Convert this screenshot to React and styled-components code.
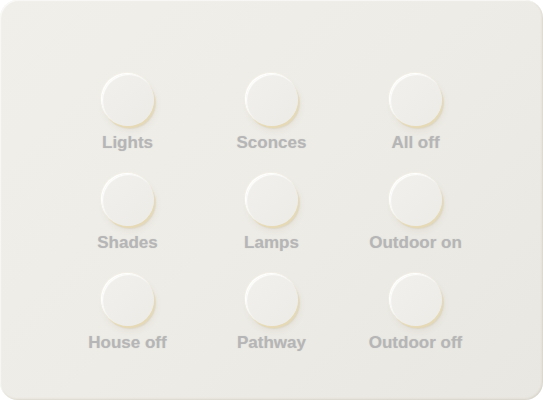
import React from "react";
import styled, { createGlobalStyle } from "styled-components";

const Global = createGlobalStyle`
  html, body { margin: 0; padding: 0; background: #ffffff; }
  body { font-family: "Liberation Sans", Arial, sans-serif; }
`;

const Panel = styled.div`
  width: 543px;
  height: 400px;
  box-sizing: border-box;
  border-radius: 18px;
  background: linear-gradient(135deg, #f1efea 0%, #eeece6 50%, #e9e7e1 100%);
  box-shadow: inset -1px -1px 2px rgba(120, 110, 90, 0.16), inset 1px 1px 1px rgba(255, 255, 255, 0.7);
  display: grid;
  grid-template-columns: repeat(3, 144px);
  grid-auto-rows: 79px;
  row-gap: 21px;
  justify-content: center;
  align-content: start;
  padding-top: 74px;
`;

const Cell = styled.div`
  display: flex;
  flex-direction: column;
  align-items: center;
  gap: 7px;
`;

const Knob = styled.button`
  width: 52px;
  height: 52px;
  padding: 0;
  border: none;
  border-radius: 50%;
  background: linear-gradient(135deg, #f1f0ec 0%, #eeede9 60%, #ecebe6 100%);
  box-shadow:
    inset 1px 1px 1px rgba(255, 255, 255, 0.9),
    -1px -1px 0 rgba(255, 255, 255, 0.95),
    -1px -1px 2px rgba(255, 253, 240, 0.9),
    1px 2px 0 #e6d9b5,
    2px 3px 1px rgba(210, 190, 140, 0.3),
    2px 5px 7px rgba(90, 80, 60, 0.07);
  cursor: pointer;
`;

const Label = styled.span`
  font-family: "Liberation Sans", Arial, sans-serif;
  font-weight: 700;
  font-size: 17px;
  line-height: 20px;
  color: #b6b6b7;
  white-space: nowrap;
  text-shadow: 0 0 1px rgba(182, 182, 183, 0.5);
`;

const items = [
  "Lights", "Sconces", "All off",
  "Shades", "Lamps", "Outdoor on",
  "House off", "Pathway", "Outdoor off",
];

export default function App() {
  return (
    <>
      <Global />
      <Panel>
        {items.map((t) => (
          <Cell key={t}>
            <Knob aria-label={t} />
            <Label>{t}</Label>
          </Cell>
        ))}
      </Panel>
    </>
  );
}
